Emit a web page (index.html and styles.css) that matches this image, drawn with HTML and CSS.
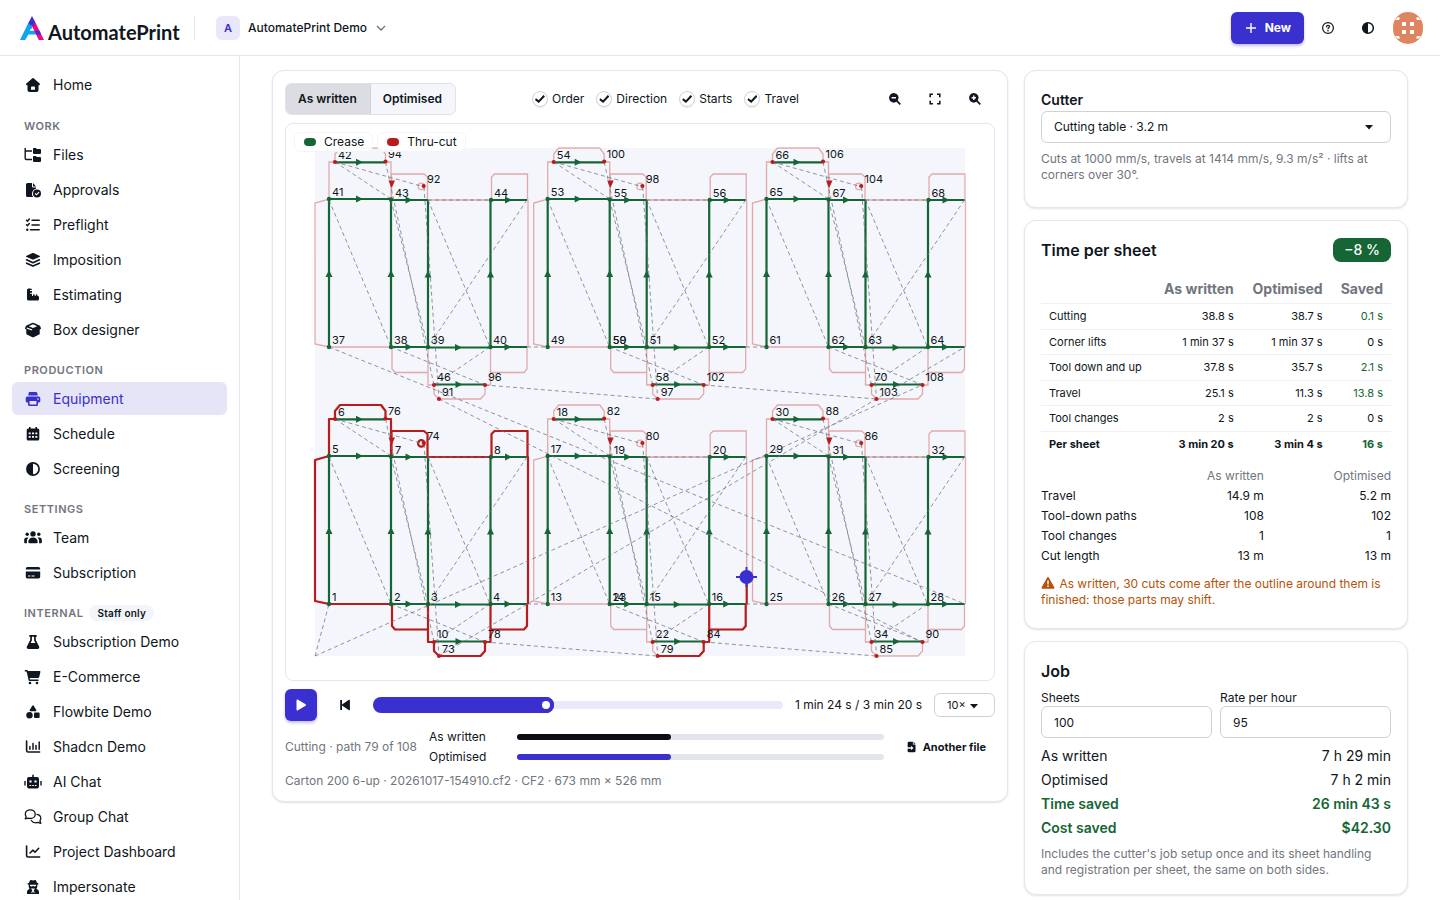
FILE: index.html
```html
<!DOCTYPE html>
<html lang="en">
<head>
<meta charset="utf-8">
<title>Equipment · AutomatePrint</title>
<meta name="viewport" content="width=device-width, initial-scale=1">
<link rel="stylesheet" href="styles.css">
</head>
<body>
<svg class="sprite" aria-hidden="true">
  <symbol id="i-home" viewBox="0 0 18 16"><path fill-rule="evenodd" d="M8.4 1.3a1 1 0 0 1 1.200 0l6 5.300c.7.600.3 1.600-.5 1.600h-.6V13a2 2 0 0 1-2 2h-7a2 2 0 0 1-2-2V8.200h-.6c-.8 0-1.200-1-.5-1.600zM8 9.500a1 1 0 0 0-1 1v2.300h4v-2.300a1 1 0 0 0-1-1z"/></symbol>
  <symbol id="i-tree" viewBox="0 0 18 16"><path d="M1.200 1v10.500a1 1 0 0 0 1 1H8M1.200 4h6.800" fill="none" stroke="currentColor" stroke-width="1.400"/><path d="M9.500 1h2.300l1 1h3.200a1 1 0 0 1 1 1v3a1 1 0 0 1-1 1H10a1 1 0 0 1-1-1V1.500zM9.500 9h2.300l1 1h3.200a1 1 0 0 1 1 1v3a1 1 0 0 1-1 1H10a1 1 0 0 1-1-1V9.500z"/></symbol>
  <symbol id="i-filecheck" viewBox="0 0 18 16"><path fill-rule="evenodd" d="M3.500 1H8v3.500a1 1 0 0 0 1 1h3v1.300A5 5 0 0 0 9.200 15H3.500A1.500 1.500 0 0 1 2 13.500v-11A1.500 1.500 0 0 1 3.500 1zM9 1l3 3.500H9z"/><path fill-rule="evenodd" d="M13 7.500a4 4 0 1 1 0 8 4 4 0 0 1 0-8zm1.700 2.300-2.200 2.200-1-1-.8.800 1.800 1.700 3-3z"/></symbol>
  <symbol id="i-checks" viewBox="0 0 18 16"><path d="m2.500 3.200 1 1 1.800-2.200M2.500 7.700l1 1 1.800-2.200M8 3.200h7.200M8 8h7.200M6.500 12.800h8.700" fill="none" stroke="currentColor" stroke-width="1.500" stroke-linecap="round"/><circle cx="3.300" cy="12.800" r="1.200"/></symbol>
  <symbol id="i-layers" viewBox="0 0 18 16"><path d="M8.500 1.100a1.200 1.200 0 0 1 1 0l5.900 2.600c.8.400.8 1 0 1.300L9.500 7.600a1.200 1.200 0 0 1-1 0L2.600 5c-.8-.3-.8-.9 0-1.300z"/><path d="m2.600 7.800 6.400 2.900 6.400-2.900M2.600 11.200 9 14.100l6.400-2.900" fill="none" stroke="currentColor" stroke-width="1.600" stroke-linecap="round" stroke-linejoin="round"/></symbol>
  <symbol id="i-ruler" viewBox="0 0 18 16"><path d="M3 3a1.500 1.500 0 0 1 1.500-1.500h2A1.500 1.500 0 0 1 8 3H6v1h2v1.700H6v1h2v2.300h1v-1.500h1.700V9h1V7.500h1.700V9h.6a1.500 1.500 0 0 1 1 1.500V12a1.500 1.500 0 0 1-1.500 1.500H4.500A1.500 1.500 0 0 1 3 12z"/></symbol>
  <symbol id="i-box" viewBox="0 0 18 16"><path fill-rule="evenodd" d="M9 .8a2 2 0 0 1 1 .3l6 2.600 1 2.500a.8.800 0 0 1-.4.900l-.9.400v4.200a1 1 0 0 1-.6.900L9.600 15.200a1.500 1.500 0 0 1-1.200 0L2.900 12.600a1 1 0 0 1-.6-.9V7.500l-.9-.4a.8.800 0 0 1-.4-.9l1-2.500 6-2.600a2 2 0 0 1 1-.3zM9 2.300 4.800 4.200 9 6.100l4.200-1.900zM3 5.400l-.5 1 5 2.200.9-1.200z"/></symbol>
  <symbol id="i-printer" viewBox="0 0 18 16"><path fill-rule="evenodd" d="M5.500 1h6.300a1.500 1.500 0 0 1 1.500 1.100l.5 2.400H4.200l.5-2.400A1 1 0 0 1 5.500 1zM3.500 5.500h11A1.800 1.800 0 0 1 16.300 7.300v2.600A1.600 1.600 0 0 1 14.700 11.500H14v2a1.500 1.500 0 0 1-1.500 1.500h-7A1.500 1.500 0 0 1 4 13.500v-2h-.7A1.600 1.600 0 0 1 1.700 9.900V7.300a1.800 1.800 0 0 1 1.800-1.800zM5.600 10v3.400h6.800V10zM14 7.300a.8.800 0 1 0 0 1.600.8.800 0 0 0 0-1.600z"/></symbol>
  <symbol id="i-calendar" viewBox="0 0 18 16"><path fill-rule="evenodd" d="M5 1h1.600v1.500h4.800V1H13v1.500h.8a1.500 1.500 0 0 1 1.500 1.500v9a1.500 1.500 0 0 1-1.500 1.500H4.200A1.500 1.500 0 0 1 2.700 13V4a1.500 1.500 0 0 1 1.500-1.500H5zM4.700 6.500v1.700h2V6.500zm3.300 0v1.700h2V6.500zm3.300 0v1.700h2V6.500zM4.700 10v1.700h2V10zM8 10v1.700h2V10zm3.300 0v1.700h2V10z"/></symbol>
  <symbol id="i-half" viewBox="0 0 18 16"><circle cx="9" cy="8" r="6.100" fill="none" stroke="currentColor" stroke-width="1.700"/><path d="M9 2a6 6 0 0 0 0 12z"/></symbol>
  <symbol id="i-users" viewBox="0 0 18 16"><circle cx="9" cy="3.900" r="2.700"/><circle cx="3.200" cy="4.300" r="1.700"/><circle cx="14.800" cy="4.300" r="1.700"/><path d="M9 7.600c2.800 0 4.700 2 4.700 4.500 0 .8-.4 1.200-1 1.200H5.300c-.6 0-1-.4-1-1.200C4.300 9.600 6.200 7.600 9 7.600zM2.700 7.500h1.600a6 6 0 0 0-1.400 4.500v1.300H.9a.7.700 0 0 1-.7-.7v-2.400a2.600 2.600 0 0 1 2.500-2.700zM15.300 7.500h-1.600a6 6 0 0 1 1.400 4.500v1.300h2a.7.700 0 0 0 .7-.7v-2.400a2.600 2.600 0 0 0-2.500-2.700z"/></symbol>
  <symbol id="i-card" viewBox="0 0 18 16"><path fill-rule="evenodd" d="M3.500 2h11A1.700 1.700 0 0 1 16.200 3.700V4.500H1.800V3.700A1.700 1.700 0 0 1 3.500 2zM1.800 6.500h14.400v5.300a1.700 1.700 0 0 1-1.700 1.700h-11a1.700 1.700 0 0 1-1.700-1.700zM4 10.500v1.100h2.300v-1.100zm3.500 0v1.100h3v-1.100z"/></symbol>
  <symbol id="i-flask" viewBox="0 0 18 16"><path fill-rule="evenodd" d="M5.300 1h7.400v1.700h-.9v3.400l3.300 6.400A1.700 1.700 0 0 1 13.600 15H4.400a1.700 1.700 0 0 1-1.500-2.500l3.300-6.400V2.700h-.9zM7.900 2.700v3.800L6.600 9h4.800L10.100 6.500V2.700z"/></symbol>
  <symbol id="i-cart" viewBox="0 0 18 16"><path d="M.8 1h2.100a1 1 0 0 1 1 .7V2h11.600c.7 0 1 .5.900 1.100l-1.200 5a1.300 1.300 0 0 1-1.300 1H5.700l.3 1.400h8.500V12H5.600a1 1 0 0 1-1-.8L2.600 2.500H.8z"/><circle cx="6" cy="14" r="1.300"/><circle cx="13" cy="14" r="1.300"/></symbol>
  <symbol id="i-shapes" viewBox="0 0 18 16"><path d="M8.300 1.700a.8.800 0 0 1 1.400 0l2.600 4.300a.8.800 0 0 1-.7 1.200H6.400A.8.800 0 0 1 5.700 6z"/><circle cx="5.500" cy="11.300" r="3.200"/><rect x="10" y="8.400" width="5.600" height="5.600" rx="1"/></symbol>
  <symbol id="i-columns" viewBox="0 0 18 16"><path d="M2.600 2v9.500a1.500 1.500 0 0 0 1.500 1.500h11.500" fill="none" stroke="currentColor" stroke-width="1.600" stroke-linecap="round"/><path d="M5.900 10.300V7.500M9 10.300V4.500M12 10.300V6.500M15.200 10.300V3" fill="none" stroke="currentColor" stroke-width="1.500" stroke-linecap="round"/></symbol>
  <symbol id="i-robot" viewBox="0 0 18 16"><path fill-rule="evenodd" d="M8.200.8h1.600v2.300h3.300A1.900 1.900 0 0 1 15 5v7.500a2 2 0 0 1-2 2H5a2 2 0 0 1-2-2V5a1.900 1.900 0 0 1 1.900-1.900h3.300zM6.500 6.200a1.200 1.200 0 1 0 0 2.400 1.200 1.200 0 0 0 0-2.400zm5 0a1.200 1.200 0 1 0 0 2.400 1.200 1.200 0 0 0 0-2.400zM5.500 11v1.100h1.700V11zm2.700 0v1.100h1.600V11zm2.600 0v1.100h1.700V11z"/><path d="M.3 7h1.400v4.500H.3zM16.300 7h1.400v4.500h-1.400z"/></symbol>
  <symbol id="i-chats" viewBox="0 0 18 16"><path d="M6.300.9C9 .9 11.200 2.700 11.200 5.200S9 9.500 6.300 9.500c-.8 0-1.500-.1-2.200-.4L1.300 9.800l.9-2.200a4 4 0 0 1-.9-2.400C1.300 2.700 3.500.9 6.300.9zM13 5.300c2.200.4 3.800 2 3.800 4a4 4 0 0 1-.9 2.500l.9 2.500-2.900-.9a6 6 0 0 1-2.200.4c-1.900 0-3.600-.9-4.400-2.300" fill="none" stroke="currentColor" stroke-width="1.300" stroke-linejoin="round" stroke-linecap="round"/></symbol>
  <symbol id="i-line" viewBox="0 0 18 16"><path d="M2.600 2v9.500a1.500 1.500 0 0 0 1.500 1.500h11.500M6 9l2.800-2.800 2.200 2 3.700-3.900" fill="none" stroke="currentColor" stroke-width="1.600" stroke-linecap="round" stroke-linejoin="round"/></symbol>
  <symbol id="i-spy" viewBox="0 0 18 16"><path fill-rule="evenodd" d="M7 .9 9 1.400l2-.5a1 1 0 0 1 1.100.7l.9 2.500h1.300v1.400h-1V7.500a4 4 0 0 1-.9 2.300l1.100.7a3 3 0 0 1 1.500 2.600V15H3v-1.900a3 3 0 0 1 1.500-2.600l1.100-.7A4 4 0 0 1 4.700 7.500v-2h-1V4.100H5l.9-2.500A1 1 0 0 1 7 .9zM6 5.800v1.100l1.900.7L9 6.800l1.100.8 1.900-.7V5.800zM7 9.500l1.200 1.700L7.300 14h.9L9 12l.8 2h.9l-.9-2.800L11 9.500z"/></symbol>
  <symbol id="i-zoomout" viewBox="0 0 16 16"><path fill-rule="evenodd" d="M6.800 2a4.800 4.800 0 0 1 3.900 7.600l3.200 3.200-1.200 1.200-3.200-3.200A4.800 4.800 0 1 1 6.800 2zM4.600 6.100v1.400H9V6.100z"/></symbol>
  <symbol id="i-zoomin" viewBox="0 0 16 16"><path fill-rule="evenodd" d="M6.800 2a4.800 4.800 0 0 1 3.900 7.600l3.200 3.200-1.200 1.200-3.200-3.200A4.800 4.800 0 1 1 6.800 2zM6.100 4.600v1.500H4.600v1.400h1.500V9h1.400V7.500H9V6.100H7.500V4.600z"/></symbol>
  <symbol id="i-expand" viewBox="0 0 16 16"><path d="M3.200 6.200v-3h2.800M10 3.200h2.800v3M12.800 9.800v3H10M6 12.800H3.200v-3" fill="none" stroke="currentColor" stroke-width="1.600"/></symbol>
  <symbol id="i-help" viewBox="0 0 16 16"><circle cx="8" cy="8" r="5.400" fill="none" stroke="currentColor" stroke-width="1.200"/><path d="M6.500 6.800c0-1 .6-1.500 1.500-1.500s1.600.5 1.600 1.300c0 1-1.600 1-1.600 2.200" fill="none" stroke="currentColor" stroke-width="1.200" stroke-linecap="round"/><circle cx="8" cy="10.700" r=".8"/></symbol>
  <symbol id="i-import" viewBox="0 0 16 16"><path fill-rule="evenodd" d="M4.500 2H9v3h3v7.500a1.500 1.500 0 0 1-1.500 1.500h-6A1.500 1.500 0 0 1 3 12.500V10h4v1.800L9.700 9.200 7 6.600v1.800H3V3.500A1.500 1.500 0 0 1 4.500 2zM9.800 2 12 4.200H9.800z"/></symbol>
</svg>

<header class="topbar">
  <a class="brand" href="#" aria-label="AutomatePrint">
    <svg width="24" height="24" viewBox="0 0 24 24" aria-hidden="true"><path fill="#0ea5e9" d="M9 5.500h5L11.500 13h-.9L9.900 14.800H16l2 3.700H8.300L5.200 24H0z"/><path fill="#f0058c" d="M9.700 5.500h5.200L24 24h-5.200z"/><path fill="#3a2fcf" d="M12 0 15.200 6 13.300 11 12 7.600 10.800 10 8.600 6.800zM15 14.800h4.500l1.700 3.700h-4.400z"/></svg>
    <span class="wordmark">AutomatePrint</span>
  </a>
  <span class="rule"></span>
  <button class="org" type="button"><span class="org-badge">A</span>AutomatePrint Demo
    <svg width="12" height="12" viewBox="0 0 12 12" aria-hidden="true"><path d="m2 4 4 4 4-4" fill="none" stroke="#6b7280" stroke-width="1.300"/></svg></button>
  <div class="actions">
    <button class="new" type="button"><svg width="12" height="12" viewBox="0 0 12 12" aria-hidden="true"><path d="M6 1v10M1 6h10" stroke="currentColor" stroke-width="1.400"/></svg>New</button>
    <button class="icon-btn" type="button" aria-label="Help"><svg width="16" height="16"><use href="#i-help"/></svg></button>
    <button class="icon-btn" type="button" aria-label="Theme"><svg width="16" height="14"><use href="#i-half"/></svg></button>
    <button class="avatar" type="button" aria-label="Account"><svg width="30" height="32" viewBox="0 0 30 32"><rect width="30" height="32" rx="15" fill="#df8460"/><path fill="#fff" d="M9 10h4v4H9zM17 10h4v4h-4zM9 18h4v4H9zM17 18h4v4h-4zM5 5l2 1-1 2-4 0zM25 5l-2 1 1 2 4 0zM5 27l2-1-1-2-4 0zM25 27l-2-1 1-2 4 0z"/></svg></button>
  </div>
</header>

<div class="shell">
  <nav class="sidebar" aria-label="Main">
    <ul><li><a href="#"><svg><use href="#i-home"/></svg>Home</a></li></ul>
    <h2>WORK</h2>
    <ul>
      <li><a href="#"><svg><use href="#i-tree"/></svg>Files</a></li>
      <li><a href="#"><svg><use href="#i-filecheck"/></svg>Approvals</a></li>
      <li><a href="#"><svg><use href="#i-checks"/></svg>Preflight</a></li>
      <li><a href="#"><svg><use href="#i-layers"/></svg>Imposition</a></li>
      <li><a href="#"><svg><use href="#i-ruler"/></svg>Estimating</a></li>
      <li><a href="#"><svg><use href="#i-box"/></svg>Box designer</a></li>
    </ul>
    <h2>PRODUCTION</h2>
    <ul>
      <li><a class="active" href="#" aria-current="page"><svg><use href="#i-printer"/></svg>Equipment</a></li>
      <li><a href="#"><svg><use href="#i-calendar"/></svg>Schedule</a></li>
      <li><a href="#"><svg><use href="#i-half"/></svg>Screening</a></li>
    </ul>
    <h2>SETTINGS</h2>
    <ul>
      <li><a href="#"><svg><use href="#i-users"/></svg>Team</a></li>
      <li><a href="#"><svg><use href="#i-card"/></svg>Subscription</a></li>
    </ul>
    <h2>INTERNAL <span class="staff">Staff only</span></h2>
    <ul>
      <li><a href="#"><svg><use href="#i-flask"/></svg>Subscription Demo</a></li>
      <li><a href="#"><svg><use href="#i-cart"/></svg>E-Commerce</a></li>
      <li><a href="#"><svg><use href="#i-shapes"/></svg>Flowbite Demo</a></li>
      <li><a href="#"><svg><use href="#i-columns"/></svg>Shadcn Demo</a></li>
      <li><a href="#"><svg><use href="#i-robot"/></svg>AI Chat</a></li>
      <li><a href="#"><svg><use href="#i-chats"/></svg>Group Chat</a></li>
      <li><a href="#"><svg><use href="#i-line"/></svg>Project Dashboard</a></li>
      <li><a href="#"><svg><use href="#i-spy"/></svg>Impersonate</a></li>
    </ul>
  </nav>

  <main class="content">
    <section class="card viewer">
      <div class="toolbar">
        <div class="segmented">
          <button type="button" class="on" aria-pressed="true">As written</button><button type="button" aria-pressed="false">Optimised</button>
        </div>
        <div class="checks">
          <label><input type="checkbox" checked>Order</label>
          <label><input type="checkbox" checked>Direction</label>
          <label><input type="checkbox" checked>Starts</label>
          <label><input type="checkbox" checked>Travel</label>
        </div>
        <div class="zooms">
          <button type="button" aria-label="Zoom out"><svg width="16" height="16"><use href="#i-zoomout"/></svg></button>
          <button type="button" aria-label="Fit"><svg width="16" height="16"><use href="#i-expand"/></svg></button>
          <button type="button" aria-label="Zoom in"><svg width="16" height="16"><use href="#i-zoomin"/></svg></button>
        </div>
      </div>
      <div class="canvas">
        <svg id="sheet" viewBox="286 124 708 556" role="img" aria-label="Cutting order of the sheet"></svg>
        <div class="legend"><span><i class="crease"></i>Crease</span><span><i class="cut"></i>Thru-cut</span></div>
      </div>
      <div class="player">
        <button class="play" type="button" aria-label="Play"><svg width="12" height="12" viewBox="0 0 12 12"><path fill="currentColor" d="M1.500 1.200c0-.6.600-.9 1.100-.6l8 4.700c.5.300.5 1 0 1.400l-8 4.700c-.5.300-1.100 0-1.100-.6z"/></svg></button>
        <button class="rewind" type="button" aria-label="Back to start"><svg width="12" height="12" viewBox="0 0 12 12"><path fill="currentColor" d="M1.200 1H3v4.500L10 .800c.5-.3.900 0 .9.500v9.400c0 .5-.4.800-.9.500L3 6.500V11H1.200z"/></svg></button>
        <div class="scrub" style="--p: 0.42"><span class="fill"></span><input type="range" min="0" max="200" value="84" aria-label="Position"></div>
        <output>1 min 24 s / 3 min 20 s</output>
        <select class="speed" aria-label="Speed"><option>10×</option></select>
      </div>
      <div class="compare">
        <span class="muted">Cutting · path 79 of 108</span>
        <div class="bars">
          <span>As written</span><div class="bar dark"><i style="width: 42%"></i></div>
          <span>Optimised</span><div class="bar"><i style="width: 42%"></i></div>
        </div>
        <button class="another" type="button"><svg width="14" height="14"><use href="#i-import"/></svg>Another file</button>
      </div>
      <p class="muted">Carton 200 6-up · 20261017-154910.cf2 · CF2 · 673 mm × 526 mm</p>
    </section>

    <aside class="side">
      <section class="card cutter">
        <label for="cutter">Cutter</label>
        <select id="cutter"><option>Cutting table · 3.2 m</option></select>
        <p class="muted">Cuts at 1000 mm/s, travels at 1414 mm/s, 9.3 m/s² · lifts at corners over 30°.</p>
      </section>

      <section class="card time">
        <div class="head"><h3>Time per sheet</h3><span class="gain">−8 %</span></div>
        <table class="times">
          <thead><tr><th></th><th>As written</th><th>Optimised</th><th>Saved</th></tr></thead>
          <tbody>
            <tr><td>Cutting</td><td>38.8 s</td><td>38.7 s</td><td class="good">0.1 s</td></tr>
            <tr><td>Corner lifts</td><td>1 min 37 s</td><td>1 min 37 s</td><td>0 s</td></tr>
            <tr><td>Tool down and up</td><td>37.8 s</td><td>35.7 s</td><td class="good">2.1 s</td></tr>
            <tr><td>Travel</td><td>25.1 s</td><td>11.3 s</td><td class="good">13.8 s</td></tr>
            <tr><td>Tool changes</td><td>2 s</td><td>2 s</td><td>0 s</td></tr>
            <tr class="total"><td>Per sheet</td><td>3 min 20 s</td><td>3 min 4 s</td><td class="good">16 s</td></tr>
          </tbody>
        </table>
        <div class="stats">
          <span></span><span class="muted">As written</span><span class="muted">Optimised</span>
          <span>Travel</span><span>14.9 m</span><span>5.2 m</span>
          <span>Tool-down paths</span><span>108</span><span>102</span>
          <span>Tool changes</span><span>1</span><span>1</span>
          <span>Cut length</span><span>13 m</span><span>13 m</span>
        </div>
        <p class="warn"><svg width="14" height="12" viewBox="0 0 14 12" aria-hidden="true"><path fill="currentColor" fill-rule="evenodd" d="M6.200.5a1 1 0 0 1 1.600 0l5.500 9.800a1 1 0 0 1-.8 1.500h-11a1 1 0 0 1-.8-1.500zM6.300 3.500v4h1.400v-4zm0 5v1.400h1.400V8.500z"/></svg> As written, 30 cuts come after the outline around them is finished: those parts may shift.</p>
      </section>

      <section class="card job">
        <h3>Job</h3>
        <div class="fields">
          <label>Sheets<input type="text" inputmode="numeric" value="100"></label>
          <label>Rate per hour<input type="text" inputmode="numeric" value="95"></label>
        </div>
        <dl>
          <div><dt>As written</dt><dd>7 h 29 min</dd></div>
          <div><dt>Optimised</dt><dd>7 h 2 min</dd></div>
          <div class="saved"><dt>Time saved</dt><dd>26 min 43 s</dd></div>
          <div class="saved"><dt>Cost saved</dt><dd>$42.30</dd></div>
        </dl>
        <p class="muted">Includes the cutter's job setup once and its sheet handling and registration per sheet, the same on both sides.</p>
      </section>
    </aside>
  </main>
</div>
<script src="sheet.js"></script>
</body>
</html>
```
FILE: styles.css
```css
:root {
  --ink: #0f1620;
  --muted: #71757e;
  --line: #e3e6ee;
  --primary: #3a2fcf;
  --green: #166534;
  --red: #b91c1c;
}
* { box-sizing: border-box; }
body {
  margin: 0;
  height: 100vh;
  overflow: hidden;
  display: flex;
  flex-direction: column;
  background: #fff;
  color: var(--ink);
  font: 12px/16px Inter, "Liberation Sans", sans-serif;
}
button, input, select, output { font: inherit; color: inherit; }
button { border: 0; background: none; padding: 0; display: inline-flex; align-items: center; justify-content: center; }
svg { fill: currentColor; flex: none; }
h2, h3, p, ul, dl, dd { margin: 0; padding: 0; }
a { color: inherit; text-decoration: none; }
.sprite { display: none; }
.muted { color: var(--muted); }

.topbar {
  flex: none;
  display: flex;
  align-items: center;
  height: 56px;
  padding: 0 17px 0 20px;
  border-bottom: 1px solid var(--line);
}
.brand { display: flex; align-items: center; gap: 4px; }
.wordmark { width: 130px; padding-top: 8px; font: 700 20px/24px Lato, sans-serif; }
.rule { width: 1px; height: 24px; margin: 0 21px 0 16px; background: var(--line); }
.org { gap: 8px; font-weight: 500; }
.org-badge {
  width: 24px;
  border-radius: 6px;
  background: #e9e7f9;
  color: var(--primary);
  font-size: 11px;
  line-height: 24px;
  font-weight: 600;
}
.actions { display: flex; align-items: center; margin-left: auto; }
.new {
  gap: 8px;
  height: 32px;
  padding: 0 13px 0 14px;
  margin-right: 4px;
  border-radius: 6px;
  background: var(--primary);
  color: #fff;
  font-weight: 700;
  box-shadow: 0 2px 3px rgb(58 47 207 / 30%);
}
.icon-btn { width: 40px; height: 32px; }
.avatar { margin-left: 5px; }

.shell { flex: 1; display: flex; min-height: 0; }
.sidebar { width: 240px; flex: none; padding: 12px 12px 0; border-right: 1px solid var(--line); overflow: hidden; }
.sidebar ul { list-style: none; display: grid; gap: 2px; }
.sidebar ul:first-child { margin-bottom: 1px; }
.sidebar a { display: flex; align-items: center; gap: 11px; height: 33px; padding: 0 12px; border-radius: 6px; font-size: 14px; line-height: 20px; }
.sidebar a svg { width: 18px; height: 16px; }
.sidebar a.active { background: #e6e4f7; color: var(--primary); }
.sidebar h2 {
  display: flex;
  align-items: center;
  gap: 6px;
  height: 36px;
  padding: 11px 12px 0;
  color: var(--muted);
  font-size: 11px;
  line-height: 16px;
  font-weight: 600;
  letter-spacing: 0.05em;
}
.staff { padding: 0 8px; border-radius: 8px; background: #f3f5fa; color: var(--ink); font-size: 10px; font-weight: 600; letter-spacing: 0.02em; }

.content {
  flex: 1;
  display: grid;
  grid-template-columns: minmax(0, 1fr) 384px;
  align-items: start;
  gap: 16px;
  padding: 14px 32px 0;
  overflow: hidden;
}
.card { border: 1px solid var(--line); border-radius: 12px; background: #fff; box-shadow: 0 1px 2px rgb(15 22 60 / 12%); }

.viewer { display: grid; gap: 8px; padding: 12px; }
.toolbar { display: flex; align-items: center; justify-content: space-between; }
.segmented { display: flex; border: 1px solid #e0e3eb; border-radius: 6px; overflow: hidden; background: #f4f6fb; }
.segmented button { height: 30px; padding: 0 13px 0 12px; font-weight: 600; }
.segmented .on { background: #dcdde2; border-right: 1px solid #cfd1d6; }
.checks { display: flex; gap: 12px; }
.checks label { display: flex; align-items: center; gap: 4px; }
.checks input {
  appearance: none;
  width: 16px;
  height: 16px;
  margin: 0;
  border: 1px solid #d0d2d8;
  border-radius: 50%;
  display: grid;
  place-items: center;
  box-shadow: 0 1px 1px rgb(0 0 0 / 8%);
}
.checks input:checked::before {
  content: "";
  width: 10px;
  height: 8px;
  background: var(--ink);
  clip-path: polygon(10% 42%, 0 62%, 38% 100%, 100% 18%, 85% 0, 37% 66%);
}
.zooms { display: flex; }
.zooms button { width: 40px; height: 32px; }
.canvas { position: relative; border: 1px solid var(--line); border-radius: 8px; overflow: hidden; }
.canvas svg { display: block; width: 100%; height: auto; }
.legend { position: absolute; left: 8px; top: 8px; display: flex; gap: 4px; }
.legend span { display: flex; align-items: center; gap: 8px; height: 20px; padding: 0 8px 0 9px; border: 1px solid #f4f5f8; border-radius: 6px; background: rgb(255 255 255 / 88%); }
.legend i { width: 12px; height: 8px; border-radius: 4px; }
.crease { background: var(--green); }
.cut { background: var(--red); }

.player { display: flex; align-items: center; gap: 12px; }
.play, .rewind { width: 32px; height: 32px; flex: none; }
.play { border-radius: 6px; background: var(--primary); color: #fff; box-shadow: 0 2px 3px rgb(58 47 207 / 30%); }
.scrub { flex: 1; display: grid; align-items: center; height: 16px; }
.scrub > *, .scrub::before { grid-area: 1 / 1; }
.scrub::before { content: ""; height: 8px; border-radius: 4px; background: #eae8fa; }
.fill { width: calc(16px + (100% - 16px) * var(--p)); height: 16px; border-radius: 8px; background: var(--primary); }
.scrub input { appearance: none; width: 100%; height: 16px; margin: 0; background: none; }
.scrub input::-webkit-slider-thumb { appearance: none; width: 16px; height: 16px; border: 4px solid var(--primary); border-radius: 50%; background: #fff; }
.speed, #cutter {
  appearance: none;
  border: 1px solid #cfd1d5;
  border-radius: 6px;
  background: #fff url("data:image/svg+xml,%3Csvg xmlns='http://www.w3.org/2000/svg' width='8' height='5'%3E%3Cpath d='M0 0h8L4 4.500z' fill='%230f1620'/%3E%3C/svg%3E") no-repeat;
}
.speed { width: 61px; height: 24px; padding: 0 12px; font-size: 11px; background-position: 35px 10px; }
.compare { display: flex; align-items: center; gap: 12px; margin-top: -2px; margin-bottom: -2px; }
.bars { flex: 1; display: grid; grid-template-columns: 76px 1fr; column-gap: 12px; align-items: center; line-height: 20px; }
.bar { height: 6px; border-radius: 3px; background: #e2e6ec; }
.bar i { display: block; height: 6px; border-radius: 3px; background: var(--primary); }
.bar.dark i { background: #0b0d14; }
.another { gap: 4px; padding: 0 9px; font-size: 11px; font-weight: 700; }

.side { display: grid; gap: 12px; }
.cutter { padding: 19px 16px 24px; }
.cutter label { display: block; font-size: 14px; line-height: 20px; font-weight: 600; padding-bottom: 1px; }
#cutter { display: block; width: 100%; height: 32px; padding: 0 12px; background-position: right 17px center; margin-bottom: 8px; }
.time { padding: 17px 16px 20px; }
.head { display: flex; justify-content: space-between; align-items: center; }
h3 { font-size: 16px; line-height: 24px; font-weight: 600; }
.gain { padding: 0 11px; border-radius: 8px; background: var(--green); color: #fff; font-size: 14px; line-height: 24px; font-weight: 500; }
.times { width: 100%; margin-top: 12px; border-collapse: collapse; font-size: 11px; line-height: 1.5; }
.times th { padding: 4px 8px; color: var(--muted); font-size: 14px; font-weight: 700; line-height: 21px; }
.times td { padding: 4px 8px; border-top: 1px solid #eff0f3; }
.times th, .times td { text-align: right; white-space: nowrap; }
.times td:first-child { text-align: left; }
.times .total { font-weight: 700; }
.good { color: var(--green); }
.stats { display: grid; grid-template-columns: auto 1fr 1fr; column-gap: 16px; margin-top: 10px; line-height: 20px; }
.stats span:not(:nth-child(3n + 1)) { text-align: right; }
.warn { margin-top: 10px; color: #b45309; }
.warn svg { margin: 0 1px -1px 0; }

.job { padding: 17px 16px 16px; }
.fields { display: grid; grid-template-columns: 1fr 1fr; gap: 8px; margin: 7px 0 6px; }
.fields input { display: block; width: 100%; height: 32px; padding: 0 12px; border: 1px solid #cfd1d5; border-radius: 6px; background: #fff; }
.job dl { margin-bottom: 6px; font-size: 14px; line-height: 24px; }
.job dl div { display: flex; justify-content: space-between; }
.saved { color: var(--green); font-weight: 600; }

.sheet-bg { fill: #f4f6fb; }
.outline { fill: none; stroke: var(--red); stroke-width: 1.3; opacity: .35; }
.outline-done { fill: none; stroke: var(--red); stroke-width: 2.2; stroke-linejoin: round; }
.fold { fill: none; stroke: var(--green); stroke-width: 2.2; }
.start-fold, .arrow-fold { fill: var(--green); }
.start-cut, .arrow-cut { fill: var(--red); }
.travel { fill: none; stroke: #6b7280; stroke-opacity: .75; stroke-width: 1; stroke-dasharray: 4 3; }
.num { fill: var(--ink); font-size: 11px; }
.head-pos { fill: var(--primary); stroke: var(--primary); stroke-width: 2; }
```
FILE: sheet.js
```js
// Draws the 6-up carton sheet: outlines, creases, travel moves, starts and order numbers.
const NS = "http://www.w3.org/2000/svg";
const svg = document.getElementById("sheet");

function add(name, cls, attrs, text) {
  const el = document.createElementNS(NS, name);
  el.setAttribute("class", cls);
  for (const key in attrs) el.setAttribute(key, attrs[key]);
  if (text !== undefined) el.textContent = text;
  svg.appendChild(el);
}

const OUTLINE = "M329 456 315 460V601L329 604H392V626L395 629.500H428M329 456V419H335V411L340 405H381L385.500 411V419H391V456M391.500 457V431H424L427.500 434V457H491.500V434L494.500 431H527.500V457H528V604M428 604V642H434V651L439 656M485 642H490.500V604M439 656H480.500L485 651V642M527 604V626L524 629.500H491";
const HOLE = "M424.500 443.400A3.200 3.200 0 1 1 418.100 443.400A3.200 3.200 0 1 1 424.500 443.400";
const DONE_PART = "M439 656H480.500L485 651V642H490.500V604M491 629.500H524L527 626V604H528V577";
const FOLDS = [
  [329, 604, 329, 456], [391, 604, 391, 456], [428, 604, 428, 457], [490.5, 604, 490.5, 457],
  [329, 456, 391, 456], [391, 457, 428, 457], [491, 457, 527, 457],
  [391, 604, 428, 604], [428, 604.5, 490, 604.5], [490, 604, 527, 604],
  [335, 419.3, 385, 419.3], [434, 641.5, 485, 641.5]
];
const FOLD_STARTS = [[329, 604], [391, 604], [428, 604], [490.5, 604], [329, 456], [391, 456.5], [491, 457]];
const CUT_STARTS = [[335, 419], [385.5, 418.5], [434, 642], [485, 642], [439, 656], [423.7, 443]];
const HOPS = "M329 457 391 604M391 457 428 604M428 457 490 604M527 457 428 604M335 419 391 456M335 419 421 443M385.500 419 434 642M424 444 439 656M391 604 485 642M490 604 434 642M428 457H490";
const SPOTS = [[332, 601], [394, 601], [431, 601], [493, 601], [332, 453], [395, 454], [494, 454], [338, 416], [388, 415], [427, 440], [437, 638], [442, 653], [488, 638]];

const cartons = [
  { dx: 0, dy: -257, n: [37, 38, 39, 40, 41, 43, 44, 42, 94, 92, 46, 91, 96] },
  { dx: 218.7, dy: -257, n: [49, 50, 51, 52, 53, 55, 56, 54, 100, 98, 58, 97, 102], extra: 59 },
  { dx: 437.5, dy: -257, n: [61, 62, 63, 64, 65, 67, 68, 66, 106, 104, 70, 103, 108] },
  { dx: 0, dy: 0, n: [1, 2, 3, 4, 5, 7, 8, 6, 76, 74, 10, 73, 78], done: OUTLINE + HOLE },
  { dx: 218.7, dy: 0, n: [13, 14, 15, 16, 17, 19, 20, 18, 82, 80, 22, 79, 84], extra: 23, done: DONE_PART },
  { dx: 437.5, dy: 0, n: [25, 26, 27, 28, 29, 31, 32, 30, 88, 86, 34, 85, 90] }
];

function arrow(x1, y1, x2, y2) {
  const a = Math.atan2(y2 - y1, x2 - x1) * 180 / Math.PI;
  return `translate(${(x1 + x2) / 2} ${(y1 + y2) / 2}) rotate(${a})`;
}

add("rect", "sheet-bg", { x: 315, y: 148, width: 650, height: 508 });

for (const c of cartons) {
  const at = { transform: `translate(${c.dx} ${c.dy})` };
  add("path", "outline", { d: OUTLINE + HOLE, ...at });
  for (const [x1, y1, x2, y2] of FOLDS) {
    add("path", "fold", { d: `M${x1} ${y1}L${x2} ${y2}`, ...at });
    add("path", "arrow-fold", { d: "M-4 -3.500 3 0 -4 3.500z", transform: at.transform + arrow(x1, y1, x2, y2) });
  }
  if (c.done) add("path", "outline-done", { d: c.done, ...at });
}

for (const c of cartons) add("path", "travel", { d: HOPS, transform: `translate(${c.dx} ${c.dy})` });
add("path", "travel", {
  d: "M315 656 329 604M315 656 922 385M439 656 965 347M329 347 965 604M439 399 922 642" +
     "M485 385 657 399M704 385 876 399M485 642 657 656M704 642 876 656M527 347H548M746 347H767M527 604H548M746 604H767"
});

for (const c of cartons) {
  const at = { transform: `translate(${c.dx} ${c.dy})` };
  for (const [cx, cy] of FOLD_STARTS) add("circle", "start-fold", { cx, cy, r: 2.2, ...at });
  for (const [cx, cy] of CUT_STARTS) add("circle", "start-cut", { cx, cy, r: 2.1, ...at });
  add("path", "arrow-cut", { d: "M388.500 437.500H395L391.700 445z", ...at });
  c.n.forEach((n, i) => add("text", "num", { x: SPOTS[i][0], y: SPOTS[i][1], ...at }, n));
  if (c.extra) add("text", "num", { x: 394, y: 601, ...at }, c.extra);
}

add("path", "head-pos", { d: "M736 577H757M746.500 567V587" });
add("circle", "head-pos", { cx: 746.5, cy: 577, r: 6 });
```
